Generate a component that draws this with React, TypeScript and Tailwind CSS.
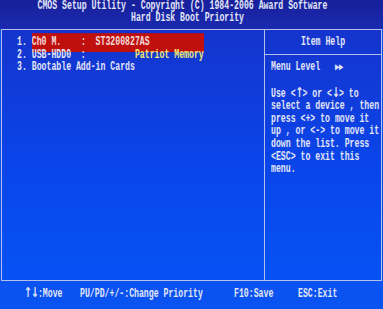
const mono = "font-['Liberation_Mono','DejaVu_Sans_Mono',monospace]";

function Line({
  children,
  className = "",
}: {
  children: React.ReactNode;
  className?: string;
}) {
  return (
    <div className={`h-[12.6px] leading-[12.6px] whitespace-pre ${className}`}>
      <span className="inline-block scale-y-[1.45]">{children}</span>
    </div>
  );
}

// arrows drawn with DejaVu, Liberation's are tiny
function Arr({ c }: { c: string }) {
  return (
    <span className="font-['DejaVu_Sans',sans-serif] text-[9.5px] leading-none tracking-[-1px]">
      {c}
    </span>
  );
}

export default function App() {
  return (
    <div
      className={`${mono} w-[383px] h-[309px] flex flex-col overflow-hidden text-[8.2px] font-bold text-[#e2e5f6] bg-[#0a50ec]`}
    >
      {/* header */}
      <div className="h-[29px] shrink-0 bg-gradient-to-b from-[#18209a] to-[#1a2ab0] flex flex-col items-center">
        <Line className="h-[12px] leading-[12px] pr-[18px]">
          CMOS Setup Utility - Copyright (C) 1984-2006 Award Software
        </Line>
        <Line className="h-[11px] leading-[11px] pr-[8px]">Hard Disk Boot Priority</Line>
      </div>

      {/* main box */}
      <div className="h-[252px] shrink-0 mx-[1px] flex border-[1.5px] border-[#b4c0ea] bg-gradient-to-b from-[#1434cc] via-[#0a44e8] to-[#0652f4]">
        <div className="flex-1 pl-[15px] pt-[6px]">
          <Line>
            {"1. "}
            <span className="inline-block w-[172px] bg-[#c0100e] text-[#f4dcdc]">
              {"Ch0 M.    :  ST3200827AS"}
            </span>
          </Line>
          <Line>
            {"2. USB-HDD0  :          "}
            <span className="text-[#f2e872]">Patriot Memory</span>
          </Line>
          <Line>3. Bootable Add-in Cards</Line>
        </div>

        <div className="w-[117px] shrink-0 border-l-[1.5px] border-[#b4c0ea] flex flex-col">
          <div className="h-[25px] shrink-0 flex items-center justify-center border-b-[1.5px] border-[#b4c0ea]">
            <Line>Item Help</Line>
          </div>
          <div className="pl-[6px] pt-[6px]">
            <Line>
              {"Menu Level   "}
              <span className="text-[7px]">{"\u25B6\u25B6"}</span>
            </Line>
            <div className="h-[14px]" />
            <Line>
              {"Use <"}
              <Arr c={"\u2191"} />
              {"> or <"}
              <Arr c={"\u2193"} />
              {"> to"}
            </Line>
            <Line>select a device , then</Line>
            <Line>press {"<+>"} to move it</Line>
            <Line>up , or {"<->"} to move it</Line>
            <Line>down the list. Press</Line>
            <Line>{"<ESC>"} to exit this</Line>
            <Line>menu.</Line>
          </div>
        </div>
      </div>

      {/* footer */}
      <div className="flex-1 flex items-center pl-[24px] pb-[1px] bg-[#0a53f0]">
        <Line className="w-[56px]">
          <Arr c={"\u2191\u2193"} />
          :Move
        </Line>
        <Line className="w-[154px]">PU/PD/+/-:Change Priority</Line>
        <Line className="w-[64px]">F10:Save</Line>
        <Line>ESC:Exit</Line>
      </div>
    </div>
  );
}
